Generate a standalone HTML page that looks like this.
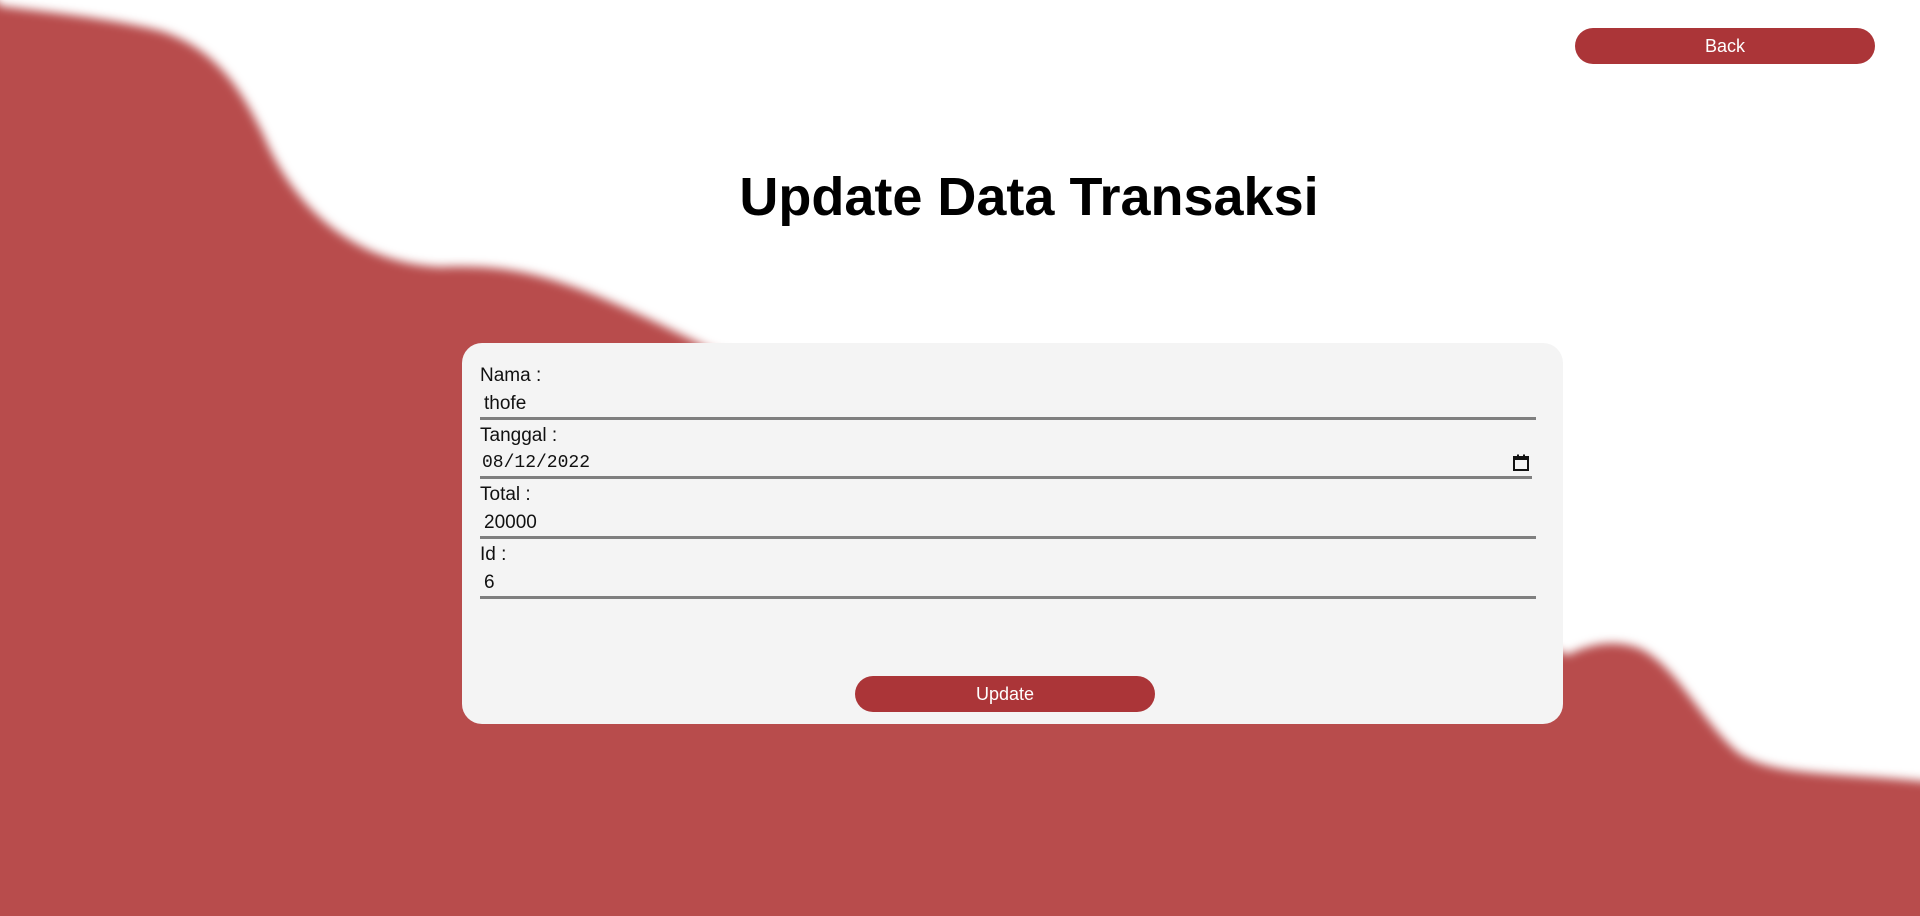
<!DOCTYPE html>
<html><head><meta charset="utf-8"><style>
html,body{margin:0;padding:0;width:1920px;height:916px;overflow:hidden;background:#b84c4c;font-family:"Liberation Sans",sans-serif;}
svg.bg{position:absolute;left:0;top:0;width:1920px;height:916px}
.back{position:absolute;left:1575px;top:28px;width:300px;height:36px;border-radius:18px;background:#ab3538;color:#fff;font-size:18px;line-height:36px;text-align:center}
h1{position:absolute;left:0;width:2058px;top:164px;margin:0;text-align:center;font-size:54px;font-weight:bold;letter-spacing:0px;color:#000;line-height:66px}
.card{position:absolute;left:462px;top:343px;width:1101px;height:381px;border-radius:20px;background:#f4f4f4}
.lbl{position:absolute;left:18px;font-size:19px;color:#111}
.val{position:absolute;left:22px;font-size:19px;color:#111}
.mono{font-family:"Liberation Mono",monospace;font-size:18px;left:20px}
.line{position:absolute;left:18px;width:1056px;height:3px;background:#7f7f7f}
.upd{position:absolute;left:393px;top:333px;width:300px;height:36px;border-radius:18px;background:#ab3538;color:#fff;font-size:18px;line-height:36px;text-align:center}
</style></head><body>
<svg class="bg" viewBox="0 0 1568 748" preserveAspectRatio="none">
<defs><filter id="b" x="-5%" y="-5%" width="110%" height="110%"><feGaussianBlur stdDeviation="4"/></filter></defs>
<rect width="1568" height="748" fill="#b84c4c"/>
<path filter="url(#b)" fill="#ffffff" d="M -20 -20 L 0 5 C 40 10 90 15 130 25 C 180 40 200 80 215 110 C 240 170 290 215 360 218 C 430 215 470 230 580 285 L 1000 400 L 1280 535 C 1300 525 1320 522 1340 530 C 1370 545 1390 590 1420 615 C 1450 635 1500 630 1590 640 L 1590 -20 Z"/>
</svg>
<div class="back">Back</div>
<h1>Update Data Transaksi</h1>
<div class="card">
<div class="lbl" style="top:22px">Nama :</div>
<div class="val" style="top:50px">thofe</div>
<div class="line" style="top:74px"></div>
<div class="lbl" style="top:82px">Tanggal :</div>
<div class="val mono" style="top:110px">08/12/2022</div>
<svg style="position:absolute;left:1049px;top:110px" width="20" height="20" viewBox="0 0 20 20"><rect x="3" y="4" width="14" height="13" fill="none" stroke="#111" stroke-width="2"/><rect x="3" y="4" width="14" height="3" fill="#111"/><rect x="6" y="1.5" width="2" height="3" fill="#111"/><rect x="12" y="1.5" width="2" height="3" fill="#111"/></svg>
<div class="line" style="top:133px;width:1052px"></div>
<div class="lbl" style="top:141px">Total :</div>
<div class="val" style="top:169px">20000</div>
<div class="line" style="top:193px"></div>
<div class="lbl" style="top:201px">Id :</div>
<div class="val" style="top:229px">6</div>
<div class="line" style="top:253px"></div>
<div class="upd">Update</div>
</div>
</body></html>
